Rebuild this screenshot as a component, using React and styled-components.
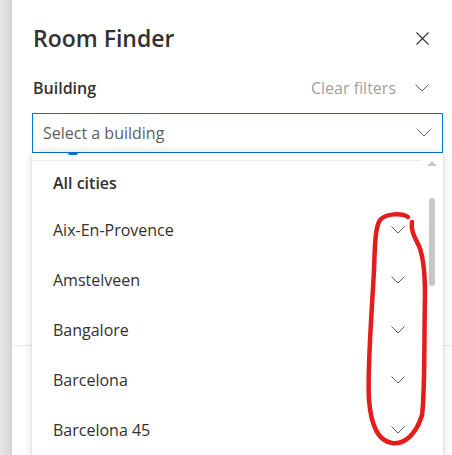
import React from 'react';
import styled, { createGlobalStyle } from 'styled-components';

const GlobalStyle = createGlobalStyle`
  html, body {
    margin: 0;
    padding: 0;
    background: #ffffff;
    overflow: hidden;
  }
  body {
    font-family: "Open Sans", "Noto Sans", "Liberation Sans", sans-serif;
    color: #323130;
  }
`;

const cities = ['Aix-En-Provence', 'Amstelveen', 'Bangalore', 'Barcelona', 'Barcelona 45'];

const Page = styled.div`
  position: relative;
  display: flex;
  width: 452px;
  height: 455px;
  overflow: hidden;
`;

const Backdrop = styled.div`
  width: 12px;
  flex: none;
  background: linear-gradient(to right, #e6e6e6, #d9d9d9 80%, #cfcfcf);
`;

const Panel = styled.div`
  flex: 1;
  display: flex;
  flex-direction: column;
  padding: 22px 9px 0 20px;
  background: #ffffff;
`;

const Header = styled.div`
  display: flex;
  align-items: center;
  justify-content: space-between;
  height: 32px;
  padding-right: 14px;
`;

const Title = styled.h1`
  margin: 0 0 0 1px;
  font-size: 23px;
  font-weight: 600;
  line-height: 32px;
  color: #323130;
`;

const IconSlot = styled.span`
  display: flex;
  align-items: center;
  color: #323130;
`;

const FilterRow = styled.div`
  display: flex;
  align-items: center;
  justify-content: space-between;
  height: 32px;
  margin-top: 18px;
  padding-right: 14px;
`;

const Label = styled.span`
  margin-left: 1px;
  font-size: 16px;
  font-weight: 600;
  color: #323130;
`;

const Actions = styled.div`
  display: flex;
  align-items: center;
  gap: 19px;
`;

const ClearLink = styled.span`
  font-size: 16px;
  color: #a19f9d;
`;

const SelectWrap = styled.div`
  position: relative;
  margin-top: 9px;
`;

const SelectBox = styled.div`
  display: flex;
  align-items: center;
  justify-content: space-between;
  height: 40px;
  box-sizing: border-box;
  border: 1px solid #0078d4;
  padding: 0 11px 0 10px;
  font-size: 16px;
  color: #605e5c;
`;

const Dropdown = styled.div`
  position: absolute;
  top: 100%;
  left: 0;
  right: 0;
  height: 320px;
  display: grid;
  grid-template-columns: 1fr 22px;
  background: #ffffff;
  box-shadow: 0 0 9px rgba(0, 0, 0, 0.16), 0 0 2px rgba(0, 0, 0, 0.1);
  z-index: 2;
`;

const FocusMark = styled.span`
  position: absolute;
  top: 0;
  left: 36px;
  width: 10px;
  height: 2px;
  border-radius: 0 0 2px 2px;
  background: #0078d4;
`;

const List = styled.div`
  margin-top: 7px;
  border-top: 1px solid #edebe9;
`;

const GroupHeader = styled.div`
  height: 44px;
  display: flex;
  align-items: center;
  padding-left: 21px;
  font-size: 16px;
  font-weight: 600;
  color: #323130;
`;

const Item = styled.div`
  height: 50px;
  display: flex;
  align-items: center;
  justify-content: space-between;
  padding: 0 16px 0 21px;
  font-size: 16px;
  color: #323130;
`;

const Scrollbar = styled.div`
  display: flex;
  flex-direction: column;
  align-items: center;
  padding-top: 8px;
`;

const UpArrow = styled.span`
  width: 0;
  height: 0;
  border-left: 5px solid transparent;
  border-right: 5px solid transparent;
  border-bottom: 5px solid #c8c6c4;
`;

const Thumb = styled.span`
  width: 6px;
  height: 88px;
  margin-top: 32px;
  border-radius: 3px;
  background: #c8c6c4;
`;

const Behind = styled.div`
  height: 192px;
  flex: none;
`;

const Divider = styled.div`
  border-top: 1px solid #edebe9;
  margin: 0 -9px 0 -20px;
`;

const Annotation = styled.svg`
  position: absolute;
  inset: 0;
  pointer-events: none;
  z-index: 5;
`;

function Chevron({ color = '#605e5c' }) {
  return (
    <svg width="14" height="8" viewBox="0 0 14 8" fill="none">
      <path d="M0.5 0.5 L7 7 L13.5 0.5" stroke={color} strokeWidth="1" />
    </svg>
  );
}

function CloseIcon() {
  return (
    <svg width="13" height="13" viewBox="0 0 13 13" fill="none">
      <path d="M0.5 0.5 L12.5 12.5 M12.5 0.5 L0.5 12.5" stroke="#323130" strokeWidth="1.1" />
    </svg>
  );
}

export default function App() {
  return (
    <>
      <GlobalStyle />
      <Page>
        <Backdrop />
        <Panel>
          <Header>
            <Title>Room Finder</Title>
            <IconSlot><CloseIcon /></IconSlot>
          </Header>
          <FilterRow>
            <Label>Building</Label>
            <Actions>
              <ClearLink>Clear filters</ClearLink>
              <Chevron color="#5c5a9a" />
            </Actions>
          </FilterRow>
          <SelectWrap>
            <SelectBox>
              <span>Select a building</span>
              <Chevron />
            </SelectBox>
            <Dropdown>
              <FocusMark />
              <List>
                <GroupHeader>All cities</GroupHeader>
                {cities.map((c) => (
                  <Item key={c}>
                    <span>{c}</span>
                    <Chevron />
                  </Item>
                ))}
              </List>
              <Scrollbar>
                <UpArrow />
                <Thumb />
              </Scrollbar>
            </Dropdown>
          </SelectWrap>
          <Behind />
          <Divider />
        </Panel>
        <Annotation width="452" height="455" viewBox="0 0 452 455">
          <path
            d="M408 217 C402 213 386 213 380 220 C375 228 375 245 374 270 C372 310 367 370 369 400 C371 425 378 441 392 443 C406 445 417 432 422 415 C425 395 424 340 425 295 C425 268 423 252 417 242 C413 234 411 229 412 222"
            fill="none"
            stroke="#e41c1c"
            strokeWidth="4.5"
            strokeLinecap="round"
            strokeLinejoin="round"
          />
        </Annotation>
      </Page>
    </>
  );
}
